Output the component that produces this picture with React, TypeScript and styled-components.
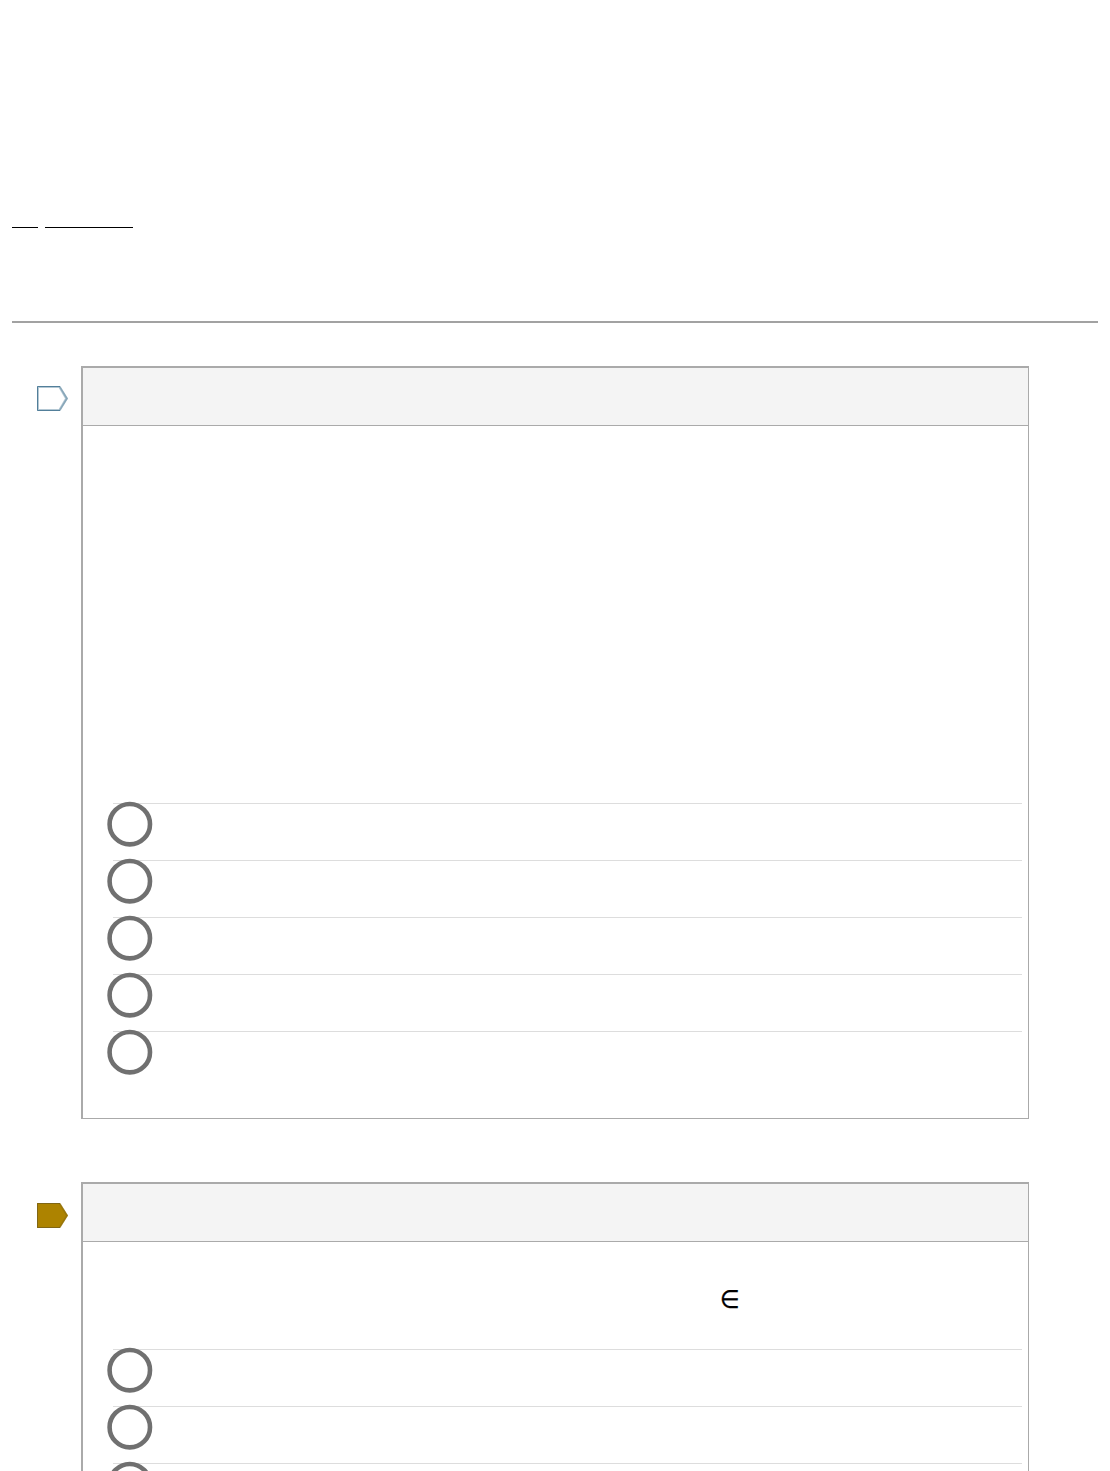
import React from "react";
import styled, { createGlobalStyle } from "styled-components";

const GlobalStyle = createGlobalStyle`
  * { box-sizing: border-box; }
  body { margin: 0; background: #fff; }
`;

const Page = styled.main`
  height: 1471px;
  overflow: hidden;
  padding: 227px 12px 0;
  background: #fff;
  font-family: "DejaVu Sans Condensed", "DejaVu Sans", sans-serif;
  color: #000;
`;

const Instructions = styled.header`
  display: flex;
  gap: 7px;
  height: 96px;
  border-bottom: 2px solid #a2a2a2;
`;

const Underline = styled.span<{ $width: number }>`
  width: ${(p) => p.$width}px;
  height: 1px;
  background: #000;
`;

const QuestionRow = styled.section<{ $top: number }>`
  display: flex;
  align-items: flex-start;
  gap: 13px;
  margin-top: ${(p) => p.$top}px;
  padding-left: 25px;
`;

const FlagButton = styled.div<{ $top: number }>`
  width: 31px;
  height: 25px;
  margin-top: ${(p) => p.$top}px;
  flex: none;
  svg { display: block; }
`;

const Card = styled.article<{ $height: number }>`
  width: 948px;
  height: ${(p) => p.$height}px;
  border: solid #aaa;
  border-width: 2px 1px 1px 2px;
`;

const CardHeader = styled.div`
  height: 58px;
  background: #f4f4f4;
  border-bottom: 1px solid #aaa;
`;

const Prompt = styled.div<{ $height: number }>`
  height: ${(p) => p.$height}px;
  padding: 43px 0 0 637px;
  font-size: 25px;
  font-stretch: condensed;
  line-height: 30px;
  -webkit-text-stroke: 0.3px #000;
`;

const Answers = styled.div`
  padding: 0 6px 0 30px;
`;

const Answer = styled.label`
  display: block;
  height: 57px;
  border-top: 1px solid #ddd;
`;

const Radio = styled.svg`
  display: block;
  margin: -3px 0 0 -7px;
`;

function Flag({ marked, top }: { marked?: boolean; top: number }) {
  const stroke = marked ? "#806615" : "#527f9a";
  return (
    <FlagButton $top={top}>
      <svg width="31" height="25" viewBox="0 0 31 25">
        <path d="M0 0H23L31 12.5L23 25H0Z" fill={marked ? "#ad8300" : "#b4c8d4"} />
        {!marked && <path d="M2 2H21.8L28 12.5L21.8 23H2Z" fill="#fff" />}
        <path d="M23 .5H.5V24.5H23" fill="none" stroke={stroke} />
        <path
          d="M22.8 .6L30 12.5L22.8 24.4"
          fill="none"
          stroke={stroke}
          strokeOpacity=".45"
          strokeWidth="1.8"
        />
      </svg>
    </FlagButton>
  );
}

function Choices({ count }: { count: number }) {
  return (
    <Answers>
      {Array.from({ length: count }, (_, i) => (
        <Answer key={i}>
          <Radio width="48" height="48" viewBox="0 0 48 48">
            <circle cx="23.8" cy="23.2" r="20.2" fill="#fff" stroke="#707070" strokeWidth="4.6" />
          </Radio>
        </Answer>
      ))}
    </Answers>
  );
}

export default function App() {
  return (
    <Page>
      <GlobalStyle />
      <Instructions>
        <Underline $width={26} />
        <Underline $width={88} />
      </Instructions>
      <QuestionRow $top={43}>
        <Flag top={20} />
        <Card $height={753}>
          <CardHeader />
          <Prompt $height={377} />
          <Choices count={5} />
        </Card>
      </QuestionRow>
      <QuestionRow $top={63}>
        <Flag marked top={21} />
        <Card $height={460}>
          <CardHeader />
          <Prompt $height={107}>∈</Prompt>
          <Choices count={3} />
        </Card>
      </QuestionRow>
    </Page>
  );
}
